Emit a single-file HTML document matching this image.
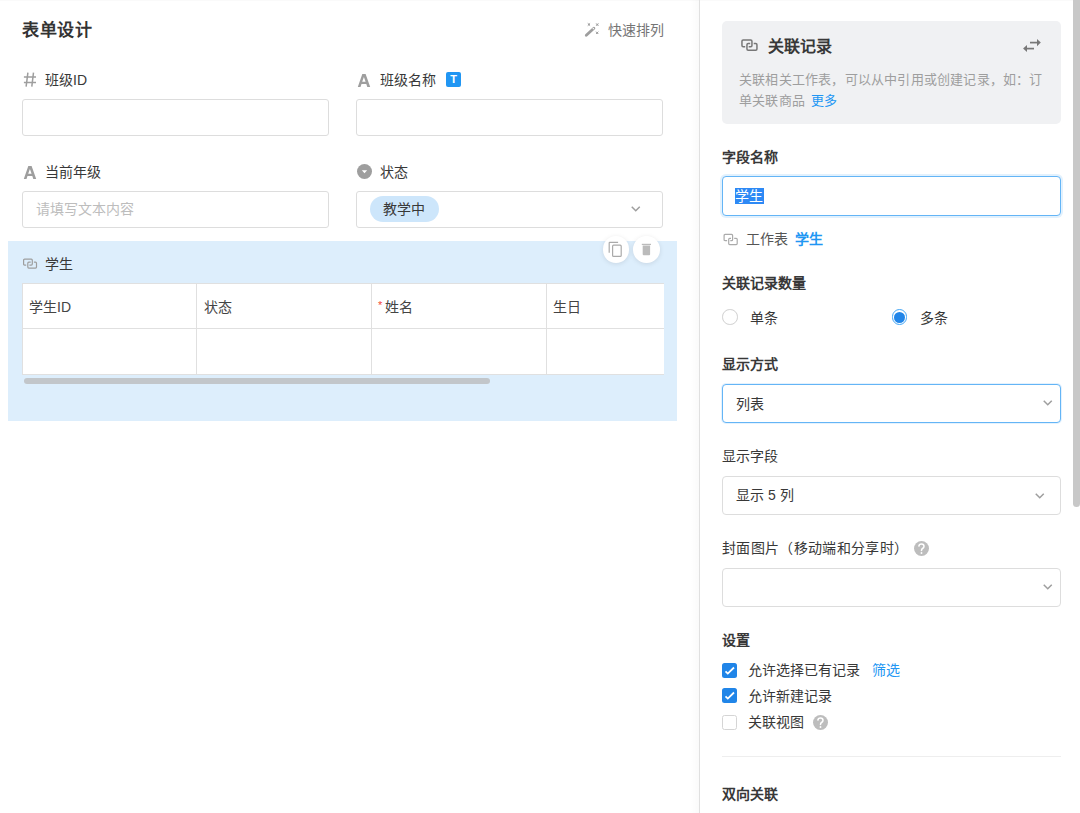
<!DOCTYPE html>
<html lang="zh-CN"><head><meta charset="utf-8">
<style>
*{box-sizing:border-box;margin:0;padding:0}
html,body{width:1080px;height:813px;overflow:hidden;background:#fff}
body{font-family:"Liberation Sans",sans-serif;color:#383838;font-size:14px;position:relative;-webkit-font-smoothing:antialiased}
.abs{position:absolute}
svg{position:absolute;overflow:visible}
.t{position:absolute;white-space:nowrap;line-height:20px}
.inp{position:absolute;border:1px solid #ddd;border-radius:3px;background:#fff}
.cb{position:absolute;width:15.4px;height:15.4px;border-radius:2.5px}
</style></head><body>
<div class="abs" style="left:0;top:0;width:1080px;height:1px;background:#fafafa"></div>

<!-- LEFT PANEL -->
<div class="t" style="left:22px;top:21px;font-size:17px;font-weight:bold;color:#333;letter-spacing:0.5px">表单设计</div>
<svg style="left:584px;top:22px" width="16" height="16" viewBox="0 0 16 16">
  <line x1="2.3" y1="13.2" x2="9.9" y2="6.3" stroke="#9e9e9e" stroke-width="2.8" stroke-linecap="round"/>
  <rect x="8.6" y="6" width="1.4" height="1.2" fill="#fff" transform="rotate(-42 9.3 6.6)"/>
  <path d="M3.7 1.3 L6.1 3.7 M6.1 1.3 L3.7 3.7 M12.1 1.4 L14.5 3.8 M14.5 1.4 L12.1 3.8 M12 9.6 L14.4 12 M14.4 9.6 L12 12" stroke="#9e9e9e" stroke-width="0.9"/>
  <rect x="4.1" y="1.7" width="1.6" height="1.6" fill="#9e9e9e"/>
  <rect x="12.5" y="1.8" width="1.6" height="1.6" fill="#9e9e9e"/>
  <rect x="12.4" y="10" width="1.6" height="1.6" fill="#9e9e9e"/>
</svg>
<div class="t" style="left:608px;top:20px;color:#757575">快速排列</div>

<svg style="left:22px;top:71px" width="16" height="17" viewBox="0 0 16 17">
  <path d="M5.9 1.7 L4.1 15.6 M11.5 1.7 L9.8 15.6 M1.9 6 H14 M1.9 11.6 H14" stroke="#9e9e9e" stroke-width="1.5" fill="none"/>
</svg>
<div class="t" style="left:45px;top:70px">班级ID</div>
<div class="inp" style="left:22px;top:99px;width:307px;height:37px"></div>

<svg style="left:357px;top:73px" width="14" height="15" viewBox="0 0 14 15">
  <path d="M5.3 1 H8.6 L13.2 14 H10.3 L9.3 11 H4.5 L3.5 14 H0.8 Z M5.2 8.8 H8.6 L6.9 3.9 Z" fill="#9e9e9e" fill-rule="evenodd"/>
</svg>
<div class="t" style="left:380px;top:70px">班级名称</div>
<div class="abs" style="left:446px;top:72px;width:15px;height:15px;background:#2196f3;border-radius:2px;color:#fff;font-size:11px;font-weight:bold;text-align:center;line-height:15px">T</div>
<div class="inp" style="left:356px;top:99px;width:307px;height:37px"></div>

<svg style="left:23px;top:165px" width="14" height="15" viewBox="0 0 14 15">
  <path d="M5.3 1 H8.6 L13.2 14 H10.3 L9.3 11 H4.5 L3.5 14 H0.8 Z M5.2 8.8 H8.6 L6.9 3.9 Z" fill="#9e9e9e" fill-rule="evenodd"/>
</svg>
<div class="t" style="left:45px;top:162px">当前年级</div>
<div class="inp" style="left:22px;top:191px;width:307px;height:37px"></div>
<div class="t" style="left:36px;top:199px;color:#bdbdbd">请填写文本内容</div>

<svg style="left:357px;top:164px" width="15" height="15" viewBox="0 0 15 15">
  <circle cx="7.5" cy="7.5" r="7.5" fill="#9e9e9e"/>
  <path d="M4.8 6.3 L10.2 6.3 L7.5 9.2 Z" fill="#fff"/>
</svg>
<div class="t" style="left:380px;top:162px">状态</div>
<div class="inp" style="left:356px;top:191px;width:307px;height:37px"></div>
<div class="abs" style="left:370px;top:196px;width:69px;height:26px;border-radius:13px;background:#cde6fb"></div>
<div class="t" style="left:383px;top:199px">教学中</div>
<svg style="left:630.75px;top:206.15px" width="10" height="6" viewBox="0 0 10 6"><path d="M0.75 0.75 L4.75 4.75 L8.75 0.75" fill="none" stroke="#9e9e9e" stroke-width="1.5"/></svg>

<!-- blue section -->
<div class="abs" style="left:8px;top:241px;width:669px;height:180px;background:#ddeefc"></div>
<svg style="left:22px;top:257px" width="17" height="13" viewBox="0 0 17 13"><path d="M4.2 8.1 H2.6 Q1.6 8.1 1.6 7.1 V3.2 Q1.6 2.2 2.6 2.2 H9.3 Q10.3 2.2 10.3 3.2 V7.1 Q10.3 8.1 9.3 8.1 H7.4 M8.7 5.2 H6.8 Q5.8 5.2 5.8 6.2 V10.1 Q5.8 11.1 6.8 11.1 H13.5 Q14.5 11.1 14.5 10.1 V6.2 Q14.5 5.2 13.5 5.2 H11.9" fill="none" stroke="#9e9e9e" stroke-width="1.2"/></svg>
<div class="t" style="left:45px;top:254px">学生</div>
<div class="abs" style="left:22px;top:283px;width:642px;height:92px;background:#fff;border:1px solid #e0e0e0;border-right:none;overflow:hidden"></div>
<div class="abs" style="left:22px;top:328px;width:642px;height:1px;background:#e0e0e0"></div>
<div class="abs" style="left:196px;top:283px;width:1px;height:92px;background:#e0e0e0"></div>
<div class="abs" style="left:371px;top:283px;width:1px;height:92px;background:#e0e0e0"></div>
<div class="abs" style="left:546px;top:283px;width:1px;height:92px;background:#e0e0e0"></div>
<div class="t" style="left:29px;top:297px;color:#444">学生ID</div>
<div class="t" style="left:204px;top:297px;color:#444">状态</div>
<div class="t" style="left:378px;top:295px;color:#f44336;font-size:11px">*</div>
<div class="t" style="left:385px;top:297px;color:#444">姓名</div>
<div class="t" style="left:553px;top:297px;color:#444">生日</div>
<div class="abs" style="left:24px;top:378px;width:466px;height:6px;border-radius:3px;background:#c2c6ca"></div>

<div class="abs" style="left:602.5px;top:236px;width:26.5px;height:26.5px;border-radius:50%;background:#fff;box-shadow:0 1px 5px rgba(0,0,0,0.1)"></div>
<svg style="left:603px;top:236px" width="26" height="26" viewBox="0 0 26 26">
  <path d="M6.2 16.7 V7 Q6.2 6.4 6.8 6.4 H15.1" fill="none" stroke="#aaa" stroke-width="1.2"/>
  <rect x="9.6" y="9.2" width="8.6" height="11.2" rx="1" fill="none" stroke="#aaa" stroke-width="1.2"/>
</svg>
<div class="abs" style="left:633.3px;top:236px;width:26.5px;height:26.5px;border-radius:50%;background:#fff;box-shadow:0 1px 5px rgba(0,0,0,0.1)"></div>
<svg style="left:634px;top:236px" width="26" height="26" viewBox="0 0 26 26">
  <rect x="7.8" y="7.8" width="9.2" height="1.2" fill="#bbb"/>
  <path d="M8.7 9.6 H16.1 V18.3 Q16.1 19.2 15.2 19.2 H9.6 Q8.7 19.2 8.7 18.3 Z" fill="#bbb"/>
</svg>

<!-- divider -->
<div class="abs" style="left:690px;top:0;width:9px;height:813px;background:linear-gradient(to right,rgba(0,0,0,0),rgba(0,0,0,0.02))"></div>
<div class="abs" style="left:699px;top:0;width:1px;height:813px;background:#e0e0e0"></div>

<!-- RIGHT PANEL -->
<div class="abs" style="left:722px;top:21px;width:339px;height:103px;background:#f0f1f3;border-radius:5px"></div>
<svg style="left:740px;top:38px" width="19" height="15" viewBox="0 0 19 15"><path d="M5.2 8.65 H3.15 Q1.95 8.65 1.95 7.45 V3.15 Q1.95 1.95 3.15 1.95 H10.75 Q11.95 1.95 11.95 3.15 V7.45 Q11.95 8.65 10.75 8.65 H8.7 M10.2 5.55 H8.15 Q6.95 5.55 6.95 6.75 V11.05 Q6.95 12.25 8.15 12.25 H15.75 Q16.95 12.25 16.95 11.05 V6.75 Q16.95 5.55 15.75 5.55 H13.7" fill="none" stroke="#777" stroke-width="1.5"/></svg>
<div class="t" style="left:768px;top:37px;font-size:16px;font-weight:bold">关联记录</div>
<svg style="left:1022px;top:38px" width="20" height="15" viewBox="0 0 20 15">
  <path d="M8 4.6 H15.5" stroke="#777" stroke-width="1.7"/>
  <path d="M15 1 L18.8 4.6 L15 8.2 Z" fill="#777"/>
  <path d="M4.8 10.6 H12" stroke="#777" stroke-width="1.7"/>
  <path d="M5 7 L1.1 10.6 L5 14.1 Z" fill="#777"/>
</svg>
<div class="t" style="left:739px;top:69px;font-size:13px;color:#9e9e9e;line-height:21px;letter-spacing:0.2px">关联相关工作表，可以从中引用或创建记录，如：订</div>
<div class="t" style="left:739px;top:90px;font-size:13px;color:#9e9e9e;line-height:21px;letter-spacing:0.2px">单关联商品<span style="color:#2196f3;margin-left:6px">更多</span></div>

<div class="t" style="left:722px;top:147px;font-weight:bold">字段名称</div>
<div class="inp" style="left:722px;top:176px;width:339px;height:40px;border-color:#64b5f6;border-radius:4px;box-shadow:0 0 0 2px rgba(33,150,243,0.13)"></div>
<div class="abs" style="left:735px;top:188px;width:29px;height:16px;background:#2d89f5"></div>
<div class="t" style="left:735px;top:186px;color:#fff">学生</div>

<svg style="left:722px;top:232px" width="17" height="15" viewBox="0 0 17 15"><path d="M5.1 8.7 H3.1 Q2.1 8.7 2.1 7.7 V3.4 Q2.1 2.4 3.1 2.4 H9.6 Q10.6 2.4 10.6 3.4 V7.7 Q10.6 8.7 9.6 8.7 H8.3 M9 6.3 H7.7 Q6.7 6.3 6.7 7.3 V11.6 Q6.7 12.6 7.7 12.6 H14.2 Q15.2 12.6 15.2 11.6 V7.3 Q15.2 6.3 14.2 6.3 H12.2" fill="none" stroke="#aaa" stroke-width="1.2"/></svg>
<div class="t" style="left:746px;top:229px;color:#555">工作表<span style="color:#2196f3;font-weight:bold;margin-left:7px">学生</span></div>

<div class="t" style="left:722px;top:273px;font-weight:bold">关联记录数量</div>
<div class="abs" style="left:722px;top:309.3px;width:15.6px;height:15.6px;border-radius:50%;border:1.3px solid #d0d0d0"></div>
<div class="t" style="left:750px;top:308px">单条</div>
<div class="abs" style="left:891.8px;top:309.3px;width:15.4px;height:15.4px;border-radius:50%;border:1.2px solid #42a5f5;background:#fff"></div>
<div class="abs" style="left:894px;top:311.5px;width:11px;height:11px;border-radius:50%;background:#2185e8"></div>
<div class="t" style="left:920px;top:308px">多条</div>

<div class="t" style="left:722px;top:354px;font-weight:bold">显示方式</div>
<div class="inp" style="left:722px;top:384px;width:339px;height:39px;border-color:#64b5f6;border-radius:4px;box-shadow:0 0 0 1px rgba(33,150,243,0.12)"></div>
<div class="t" style="left:736px;top:394px">列表</div>
<svg style="left:1042.85px;top:400.25px" width="10" height="6" viewBox="0 0 10 6"><path d="M0.75 0.75 L4.75 4.75 L8.75 0.75" fill="none" stroke="#9e9e9e" stroke-width="1.5"/></svg>

<div class="t" style="left:722px;top:446px">显示字段</div>
<div class="inp" style="left:722px;top:476px;width:339px;height:39px;border-radius:4px"></div>
<div class="t" style="left:736px;top:485px">显示 5 列</div>
<svg style="left:1035.25px;top:492.65px" width="10" height="6" viewBox="0 0 10 6"><path d="M0.75 0.75 L4.75 4.75 L8.75 0.75" fill="none" stroke="#9e9e9e" stroke-width="1.5"/></svg>

<div class="t" style="left:722px;top:538px;letter-spacing:0.35px">封面图片（移动端和分享时）</div>
<svg style="left:913.5px;top:540.5px" width="15" height="15" viewBox="0 0 15 15"><circle cx="7.5" cy="7.5" r="7.5" fill="#bdbdbd"/><path d="M4.9 5.1 Q5 2.9 7.5 2.9 Q10 2.9 10 5.3 Q10 6.7 8.6 7.5 Q7.5 8.1 7.5 9.6" fill="none" stroke="#fff" stroke-width="1.5" stroke-linecap="round"/><circle cx="7.5" cy="12" r="0.95" fill="#fff"/></svg>
<div class="inp" style="left:722px;top:568px;width:339px;height:39px;border-radius:4px"></div>
<svg style="left:1042.85px;top:584.35px" width="10" height="6" viewBox="0 0 10 6"><path d="M0.75 0.75 L4.75 4.75 L8.75 0.75" fill="none" stroke="#9e9e9e" stroke-width="1.5"/></svg>

<div class="t" style="left:722px;top:630px;font-weight:bold">设置</div>
<div class="cb" style="left:722px;top:663px;background:#2085e8"></div>
<svg style="left:722px;top:663px" width="15" height="15" viewBox="0 0 15 15"><path d="M3.5 8.3 L5.8 10.6 L12 4.5" fill="none" stroke="#fff" stroke-width="1.8"/></svg>
<div class="t" style="left:748px;top:660px">允许选择已有记录<span style="color:#2196f3;margin-left:12px">筛选</span></div>
<div class="cb" style="left:722px;top:688px;background:#2085e8"></div>
<svg style="left:722px;top:688px" width="15" height="15" viewBox="0 0 15 15"><path d="M3.5 8.3 L5.8 10.6 L12 4.5" fill="none" stroke="#fff" stroke-width="1.8"/></svg>
<div class="t" style="left:748px;top:686px">允许新建记录</div>
<div class="cb" style="left:722px;top:714.5px;border:1px solid #d5d5d5"></div>
<div class="t" style="left:748px;top:712px">关联视图</div>
<svg style="left:813px;top:715px" width="15" height="15" viewBox="0 0 15 15"><circle cx="7.5" cy="7.5" r="7.5" fill="#bdbdbd"/><path d="M4.9 5.1 Q5 2.9 7.5 2.9 Q10 2.9 10 5.3 Q10 6.7 8.6 7.5 Q7.5 8.1 7.5 9.6" fill="none" stroke="#fff" stroke-width="1.5" stroke-linecap="round"/><circle cx="7.5" cy="12" r="0.95" fill="#fff"/></svg>

<div class="abs" style="left:722px;top:756px;width:339px;height:1px;background:#eee"></div>
<div class="t" style="left:722px;top:784px;font-weight:bold">双向关联</div>

<!-- right scrollbar -->
<div class="abs" style="left:1073px;top:0;width:7px;height:507px;background:#c8c8c8;border-radius:0 0 4px 4px"></div>
</body></html>
